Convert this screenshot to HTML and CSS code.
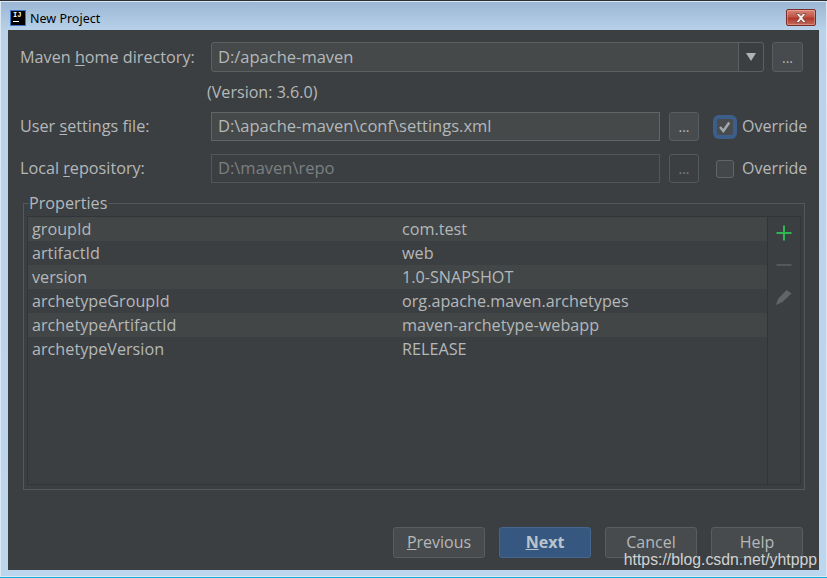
FILE: index.html
```html
<!DOCTYPE html>
<html lang="en">
<head>
<meta charset="utf-8">
<title>New Project</title>
<link rel="stylesheet" href="styles.css">
</head>
<body>
<div class="window">
  <header class="titlebar">
    <div class="app-icon"><span class="app-letters">IJ</span><span class="app-bar"></span></div>
    <div class="title">New Project</div>
    <div class="close"><svg width="16" height="10" viewBox="0 0 16 10"><path d="M3 0.5h3l2 2.2 2-2.2h3l-3.4 4.4 3.6 4.6h-3l-2.2-2.6-2.2 2.6h-3l3.6-4.6z" fill="#f4efee" stroke="#6b3a35" stroke-width=".7"/></svg></div>
  </header>
  <main class="content">
    <div class="form-row row-home">
      <label class="label">Maven <u>h</u>ome directory:</label>
      <div class="combo"><span class="value">D:/apache-maven</span><span class="arrow"><i class="tri"></i></span></div>
      <button class="browse">...</button>
    </div>
    <div class="version">(Version: 3.6.0)</div>
    <div class="form-row row-settings">
      <label class="label raised">User <u>s</u>ettings file:</label>
      <div class="field"><span class="value">D:\apache-maven\conf\settings.xml</span></div>
      <button class="browse">...</button>
      <div class="override">
        <span class="check focused"><svg width="16" height="16" viewBox="0 0 16 16"><path d="M3 8l3.400 4 5.800-8.500" fill="none" stroke="#a2a8ac" stroke-width="2.500"/></svg></span>
        <span class="raised">Override</span>
      </div>
    </div>
    <div class="form-row row-local">
      <label class="label raised">Local <u>r</u>epository:</label>
      <div class="field disabled"><span class="value">D:\maven\repo</span></div>
      <button class="browse disabled">...</button>
      <div class="override">
        <span class="check"></span>
        <span class="raised">Override</span>
      </div>
    </div>
    <fieldset class="props">
      <legend>Properties</legend>
      <div class="props-inner">
        <div class="table">
          <div class="tr"><span class="key">groupId</span><span>com.test</span></div>
          <div class="tr"><span class="key">artifactId</span><span>web</span></div>
          <div class="tr"><span class="key">version</span><span>1.0-SNAPSHOT</span></div>
          <div class="tr"><span class="key">archetypeGroupId</span><span>org.apache.maven.archetypes</span></div>
          <div class="tr"><span class="key">archetypeArtifactId</span><span>maven-archetype-webapp</span></div>
          <div class="tr"><span class="key">archetypeVersion</span><span>RELEASE</span></div>
        </div>
        <div class="tools">
          <svg width="16" height="16" viewBox="0 0 16 16"><path d="M8 0.5v15M0.5 8h15" stroke="#2fb551" stroke-width="2"/></svg>
          <svg width="16" height="16" viewBox="0 0 16 16"><path d="M0.5 8h15" stroke="#55585a" stroke-width="2"/></svg>
          <svg width="16" height="16" viewBox="0 0 16 16"><path d="M0 16l2-6 8.500-9 5 3.500-9 8.500z" fill="#626567"/></svg>
        </div>
      </div>
    </fieldset>
    <footer class="buttons">
      <button class="btn"><u>P</u>revious</button>
      <button class="btn primary"><u>N</u>ext</button>
      <button class="btn">Cancel</button>
      <button class="btn">Help</button>
    </footer>
    <div class="watermark">https://blog.csdn.net/yhtppp</div>
  </main>
</div>
</body>
</html>
```

FILE: styles.css
```css
* { box-sizing: border-box; }
html, body { margin: 0; padding: 0; }
body { width: 827px; height: 578px; overflow: hidden; background: #1a1a1a; font-family: "Open Sans", "Noto Sans", sans-serif; font-size: 16px; color: #b4b8ba; }
.window { width: 827px; height: 578px; display: flex; flex-direction: column; padding: 0 8px 7px; background: linear-gradient(#9ab6d3 0, #b9d2ea 30px, #bcd6ee 100%); border-top: 1px solid #2b2f33; border-bottom: 1px solid #12b0d8; box-shadow: inset 0 0 0 1px #dbe8f4; }
.titlebar { height: 29px; flex: none; display: flex; align-items: center; position: relative; padding-top: 5px; }
.app-icon { width: 14px; height: 14px; margin: 0 4px 0 3px; background: #000; outline: 1px solid #3b78c8; display: flex; flex-direction: column; padding: 1px 2px; }
.app-letters { font: bold 7px/7px "Liberation Mono", monospace; color: #fff; }
.app-bar { width: 6px; height: 1px; background: #fff; margin-top: 2px; }
.title { font-family: "Noto Sans", sans-serif; font-size: 12.500px; color: #000; margin-left: 1px; }
.close { margin-left: auto; margin-right: 3px; margin-top: -1px; width: 30px; height: 17px; border: 1px solid #7a2d2a; border-radius: 2px; background: linear-gradient(#d98377 0, #c25647 45%, #ad3a2b 55%, #c9695a 100%); display: flex; align-items: center; justify-content: center; box-shadow: inset 0 0 0 1px rgba(255,255,255,.25); }
.content { flex: 1; position: relative; background: #3c3f41; padding: 12px 16px 12px 12px; display: flex; flex-direction: column; min-height: 0; }
.form-row { display: flex; align-items: center; }
.label { width: 191px; flex: none; white-space: nowrap; font-size: 16.200px; }
.label u { text-underline-offset: 2px; }
.raised { padding-bottom: 2px; }
.row-home { height: 30px; }
.combo { width: 553px; height: 30px; flex: none; display: flex; background: #45494a; border: 1px solid #5d6061; border-radius: 3px; }
.value { padding-left: 6px; line-height: 28px; white-space: nowrap; font-size: 16.500px; }
.arrow { margin-left: auto; width: 25px; border-left: 1px solid #5d6061; background: #3c3f41; border-radius: 0 3px 3px 0; display: flex; align-items: center; justify-content: center; }
.tri { width: 0; height: 0; border-left: 5px solid transparent; border-right: 5px solid transparent; border-top: 8px solid #b0b3b5; }
.browse { width: 31px; height: 30px; flex: none; margin-left: 8px; background: #484b4d; border: 1px solid #5a5d5f; border-radius: 3px; color: #b4b8ba; font: inherit; font-size: 14px; padding: 0; }
.version { height: 40px; padding: 10px 0 0 187px; line-height: 20px; font-size: 16.100px; }
.row-settings, .row-local { height: 29px; }
.row-local { margin-top: 13px; }
.field { width: 449px; height: 29px; flex: none; background: #45494a; border: 1px solid #626566; }
.field .value { padding-left: 6px; line-height: 26px; }
.field.disabled { background: #3c3f41; border-color: #535658; color: #7b7f81; }
.browse.disabled { background: #3c3f41; border-color: #555859; color: #7b7f81; margin-left: 9px; width: 30px; height: 29px; }
.row-settings .browse { margin-left: 9px; width: 30px; height: 29px; }
.override { display: flex; align-items: center; margin-left: 17px; white-space: nowrap; gap: 8px; }
.check { width: 18px; height: 18px; background: #43474a; border: 1px solid #626466; border-radius: 3px; display: flex; align-items: center; justify-content: center; }
.check.focused { border-color: #3c5e8b; box-shadow: 0 0 0 3px #3c5e8b; background: #484c4e; }
.props { margin: 10px 0 0 3px; padding: 0 3px 3px; width: 782px; height: 297px; border: 1px solid #55585a; border-radius: 0; flex: none; min-width: 0; }
.props legend { padding: 0 1px 0 0; margin-left: 2px; line-height: 20px; font-size: 16.200px; }
.props-inner { height: 269px; margin-top: 3px; display: flex; border: 1px solid #323537; }
.table { flex: 1; min-width: 0; border-right: 1px solid #323537; font-size: 16.200px; }
.tr { height: 24px; line-height: 24px; padding-left: 4px; display: flex; white-space: nowrap; }
.tr:nth-child(odd) { background: #424647; }
.key { width: 370px; flex: none; }
.tools { width: 32px; flex: none; display: flex; flex-direction: column; align-items: center; gap: 16px; padding-top: 8px; }
.buttons { margin-top: auto; display: flex; justify-content: flex-end; gap: 14px; }
.btn { width: 92px; height: 31px; background: #484b4d; border: 1px solid #5a5d5f; border-radius: 3px; color: #b4b8ba; font: inherit; padding: 0 0 2px; }
.btn.primary { background: #365880; border-color: #45678f; font-weight: 700; color: #b9c4cf; }
.watermark { position: absolute; right: 2px; bottom: 0; font-family: "Liberation Sans", sans-serif; font-size: 15.800px; color: #d0d2d3; line-height: 20px; white-space: nowrap; }
```
